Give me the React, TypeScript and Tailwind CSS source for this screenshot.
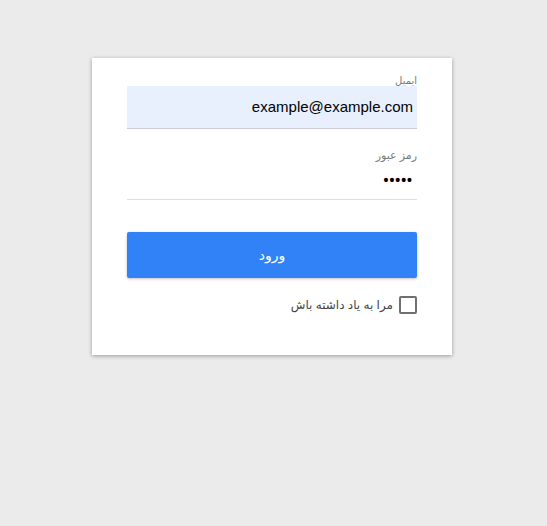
import React from 'react';

const App: React.FC = () => {
  return (
    <div
      className="min-h-[526px] w-full bg-[#ebebeb] pt-[58px] pl-[92px]"
      style={{ fontFamily: '"Liberation Sans", "DejaVu Sans", Arial, sans-serif' }}
    >
      <div dir="rtl" className="w-[360px] bg-white px-[35px] pt-[28px] pb-[41px] shadow-[0_1px_4px_rgba(0,0,0,0.35)]">
        <div className="relative">
          <span className="absolute -top-[10px] right-0 text-[10px] leading-[10px] text-[#777]">ایمیل</span>
          <div className="flex h-[43px] items-center border-b border-[#c8cbd6] bg-[#e8f0fe] pr-[4px]">
            <span dir="ltr" className="text-[15px] text-black">example@example.com</span>
          </div>
        </div>

        <div className="mt-[20px]">
          <div className="text-[11px] leading-[12px] text-[#777]">رمز عبور</div>
          <div className="flex h-[39px] items-center border-b border-[#e0e0e0] pr-[4px]">
            <span dir="ltr" className="text-[14px] font-bold tracking-[1px] text-black">•••••</span>
          </div>
        </div>

        <button className="mt-[32px] flex h-[46px] w-full items-center justify-center rounded-[2px] bg-[#3182f6] text-[14px] tracking-[2px] text-white shadow-[0_1px_3px_rgba(0,0,0,0.25)]">
          ورود
        </button>

        <label className="mt-[18px] flex items-center gap-[6px]">
          <span className="h-[18px] w-[18px] rounded-[2px] border-2 border-[#6f6f6f]" />
          <span className="text-[12px] text-[#444]">مرا به یاد داشته باش</span>
        </label>
      </div>
    </div>
  );
};

export default App;
